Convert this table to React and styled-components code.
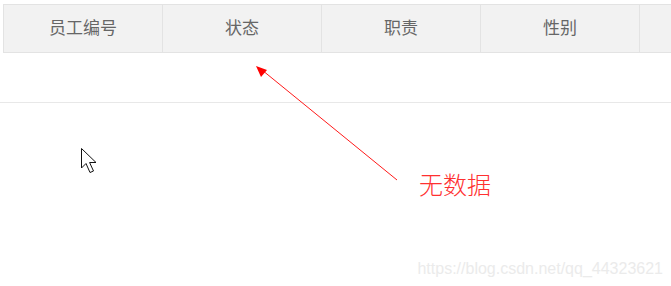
import React from 'react'
import styled, { createGlobalStyle } from 'styled-components'

const GlobalStyle = createGlobalStyle`
    html, body {
        margin: 0;
        padding: 0;
        background: #fff;
    }
`

const Stage = styled.div`
    position: relative;
    width: 671px;
    height: 286px;
    overflow: hidden;
    padding: 4px 0 0 3px;
    box-sizing: border-box;
    background: #fff;
`

const Table = styled.div`
    width: 800px;
    display: flex;
    flex-direction: column;
`

const HeadRow = styled.div`
    display: grid;
    grid-template-columns: repeat(5, 159px);
    height: 49px;
    border-top: 1px solid #e3e3e3;
    border-bottom: 1px solid #e3e3e3;
    background: #f2f2f2;
    box-sizing: border-box;
`

const HeadCell = styled.div`
    display: flex;
    align-items: center;
    justify-content: center;
    border-left: 1px solid #e3e3e3;
    font-family: "Noto Sans CJK SC", "Noto Sans", sans-serif;
    font-size: 17px;
    color: #666;
    padding-bottom: 4px;
`

const EmptyRow = styled.div`
    height: 50px;
    margin-left: -3px;
    border-bottom: 1px solid #e8e8e8;
    box-sizing: border-box;
`

const Overlay = styled.svg`
    position: absolute;
    left: 0;
    top: 0;
    pointer-events: none;
`

const Note = styled.span`
    position: absolute;
    left: ${p => p.x}px;
    top: ${p => p.y}px;
    font-family: "Noto Sans CJK SC", sans-serif;
    font-weight: 300;
    font-size: 24px;
    color: #ff3030;
    line-height: 1;
`

const Watermark = styled.span`
    position: absolute;
    right: 8px;
    bottom: 9px;
    font-family: "Liberation Sans", Arial, sans-serif;
    font-size: 16px;
    color: #ebebeb;
    line-height: 1;
`

const columns = ['员工编号', '状态', '职责', '性别', '']

const App = () => {
    return (
        <>
            <GlobalStyle />
            <Stage>
                <Table>
                    <HeadRow>
                        {columns.map((label, i) => (
                            <HeadCell key={i}>{label}</HeadCell>
                        ))}
                    </HeadRow>
                    <EmptyRow />
                </Table>

                <Overlay width="671" height="286" viewBox="0 0 671 286">
                    {/* pointer from the note up to the empty row */}
                    <line x1="397" y1="180" x2="262" y2="70" stroke="#ff1a1a" strokeWidth="1" />
                    <polygon points="256,66 267,70 261,77" fill="#ff0000" />
                    {/* mouse cursor */}
                    <path
                        d="M81.5 148.5 L81.5 168 L86 163.5 L90 172.5 L93.5 171 L89.6 162.5 L96 162.5 Z"
                        fill="#fff"
                        stroke="#111"
                        strokeWidth="1"
                        strokeLinejoin="miter"
                    />
                </Overlay>

                <Note x={419} y={172}>无数据</Note>
                <Watermark>https://blog.csdn.net/qq_44323621</Watermark>
            </Stage>
        </>
    )
}

export default App
